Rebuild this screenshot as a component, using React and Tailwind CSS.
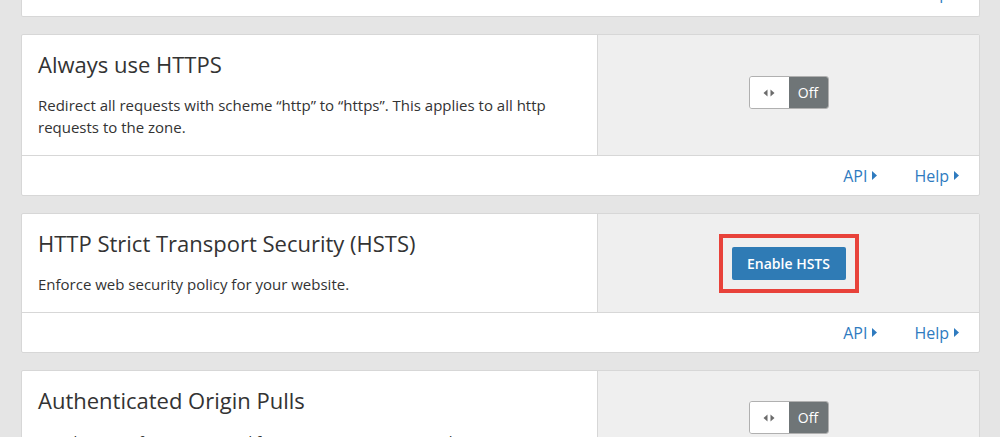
const font = { fontFamily: '"Open Sans", "Liberation Sans", sans-serif' };

function Caret() {
  return (
    <svg width="5" height="9" viewBox="0 0 5 9" className="ml-[5px] inline-block">
      <path d="M0 0 L5 4.5 L0 9 Z" fill="currentColor" />
    </svg>
  );
}

function Footer({ extra = '' }) {
  return (
    <div className={`flex h-10 items-center justify-end gap-[37px] border-t border-[#d7d7d7] pr-5 text-[16px] text-[#2f7bbf] ${extra}`}>
      <a className="flex items-center">
        API
        <Caret />
      </a>
      <a className="flex items-center">
        Help
        <Caret />
      </a>
    </div>
  );
}

function Toggle() {
  return (
    <div className="flex h-[33px] w-[80px] overflow-hidden rounded-[3px] border border-[#b0b0b0]">
      <div className="flex w-[39px] items-center justify-center bg-white">
        <svg width="12" height="8" viewBox="0 0 12 8">
          <path d="M4.5 0.5 L0.5 4 L4.5 7.5 Z" fill="#6b6b6b" />
          <path d="M7.5 0.5 L11.5 4 L7.5 7.5 Z" fill="#6b6b6b" />
        </svg>
      </div>
      <div className="flex flex-1 items-center justify-center bg-[#6f7577] text-[14px] text-white">
        Off
      </div>
    </div>
  );
}

function Card({ title, desc, children }) {
  return (
    <div className="rounded-[2px] border border-[#d7d7d7] bg-white">
      <div className="flex">
        <div className="flex-1 px-4 pt-[14px] pb-[17px] text-[#333]">
          <h3 className="text-[22px] leading-[30px]">{title}</h3>
          <p className="mt-[15px] pr-1 text-[15px] leading-[22px]">{desc}</p>
        </div>
        <div className="flex w-[382px] items-center justify-center border-l border-[#d7d7d7] bg-[#efefef] pb-[5px]">
          {children}
        </div>
      </div>
      <Footer />
    </div>
  );
}

export default function App() {
  return (
    <div className="h-[437px] overflow-hidden bg-[#e5e5e5]" style={font}>
      <div className="flex flex-col gap-[17px] pl-[21px] pr-5">
        <div className="-mt-[24px] rounded-[2px] border border-t-0 border-[#d7d7d7] bg-white">
          <Footer extra="pb-2" />
        </div>
        <Card
          title="Always use HTTPS"
          desc="Redirect all requests with scheme “http” to “https”. This applies to all http requests to the zone."
        >
          <Toggle />
        </Card>
        <Card title="HTTP Strict Transport Security (HSTS)" desc="Enforce web security policy for your website.">
          <div className="mt-[5px] border-4 border-[#e8423a] p-[9px]">
            <button className="h-[33px] w-[114px] rounded-[2px] bg-[#2f7bb5] text-[14px] font-semibold text-white">
              Enable HSTS
            </button>
          </div>
        </Card>
        <Card
          title="Authenticated Origin Pulls"
          desc="TLS client certificate presented for your origin server to authenticate."
        >
          <Toggle />
        </Card>
      </div>
    </div>
  );
}
